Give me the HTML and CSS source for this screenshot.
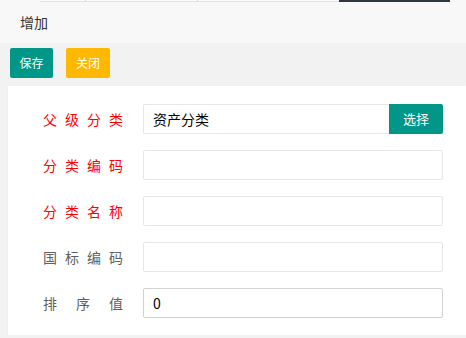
FILE: index.html
```html
<!DOCTYPE html>
<html lang="zh">
<head>
<meta charset="utf-8">
<title>增加</title>
<link rel="stylesheet" href="styles.css">
</head>
<body>
<div class="header">
  <div class="strip"><span class="seg seg-a"></span><span class="seg seg-b"></span><span class="seg seg-c"></span><span class="seg seg-dark"></span></div>
  <div class="title">增加</div>
</div>
<div class="toolbar">
  <button class="btn btn-teal btn-save">保存</button>
  <button class="btn btn-warm">关闭</button>
</div>
<div class="card">
  <div class="row">
    <label class="label req">父级分类</label>
    <div class="group">
      <input class="input input-grow" value="资产分类">
      <button class="btn btn-teal btn-pick">选择</button>
    </div>
  </div>
  <div class="row">
    <label class="label req">分类编码</label>
    <input class="input">
  </div>
  <div class="row">
    <label class="label req">分类名称</label>
    <input class="input">
  </div>
  <div class="row">
    <label class="label">国标编码</label>
    <input class="input">
  </div>
  <div class="row">
    <label class="label">排序值</label>
    <input class="input input-hover" value="0">
  </div>
</div>
</body>
</html>
```

FILE: styles.css
```css
* { box-sizing: border-box; }
body {
  margin: 0;
  background: #f2f2f2;
  font-family: "Noto Sans CJK SC", "Noto Sans", sans-serif;
  font-size: 14px;
  color: #333;
}
.header {
  background: #f8f8f8;
  height: 43px;
}
.strip {
  display: flex;
  margin-left: 40px;
  width: 410px;
  height: 2px;
  background: #fbfbfb;
  border-bottom: 1px solid #e2e2e2;
}
.seg { height: 1px; display: block; }
.seg-a { width: 46px; border-right: 1px solid #d8d8d8; }
.seg-b { width: 112px; border-right: 1px solid #d8d8d8; }
.seg-c { flex: 1; }
.seg-dark { width: 111px; height: 2px; background: #2f3745; }
.title {
  padding-left: 20px;
  line-height: 40px;
  color: #333;
}
.toolbar {
  display: flex;
  gap: 13px;
  padding: 5px 10px 8px;
}
.btn {
  height: 30px;
  border: none;
  border-radius: 2px;
  color: #fff;
  font-family: inherit;
  font-size: 12px;
  padding: 0;
  line-height: 30px;
}
.btn-teal { background: #009688; }
.btn-save { width: 43px; }
.btn-warm { background: #ffb800; width: 44px; }
.card {
  margin-left: 8px;
  background: #fff;
  padding: 18px 0 17px;
  display: flex;
  flex-direction: column;
  gap: 16px;
  box-shadow: 0 1px 2px rgba(0,0,0,0.06);
}
.row {
  display: flex;
  align-items: center;
  height: 30px;
}
.label {
  width: 80px;
  margin-left: 35px;
  margin-right: 20px;
  text-align: justify;
  text-align-last: justify;
  color: #5f5f5f;
}
.label.req { color: #ff0000; }
.group { display: flex; width: 300px; }
.input {
  width: 300px;
  height: 30px;
  border: 1px solid #e6e6e6;
  border-radius: 2px;
  padding: 0 9px;
  font-family: inherit;
  font-size: 14px;
  color: #000;
  outline: none;
}
.input-grow { flex: 1; width: auto; border-right: none; border-radius: 2px 0 0 2px; }
.input-hover { border-color: #d2d2d2; }
.btn-pick { width: 54px; font-size: 13px; border-radius: 0 2px 2px 0; }
```
